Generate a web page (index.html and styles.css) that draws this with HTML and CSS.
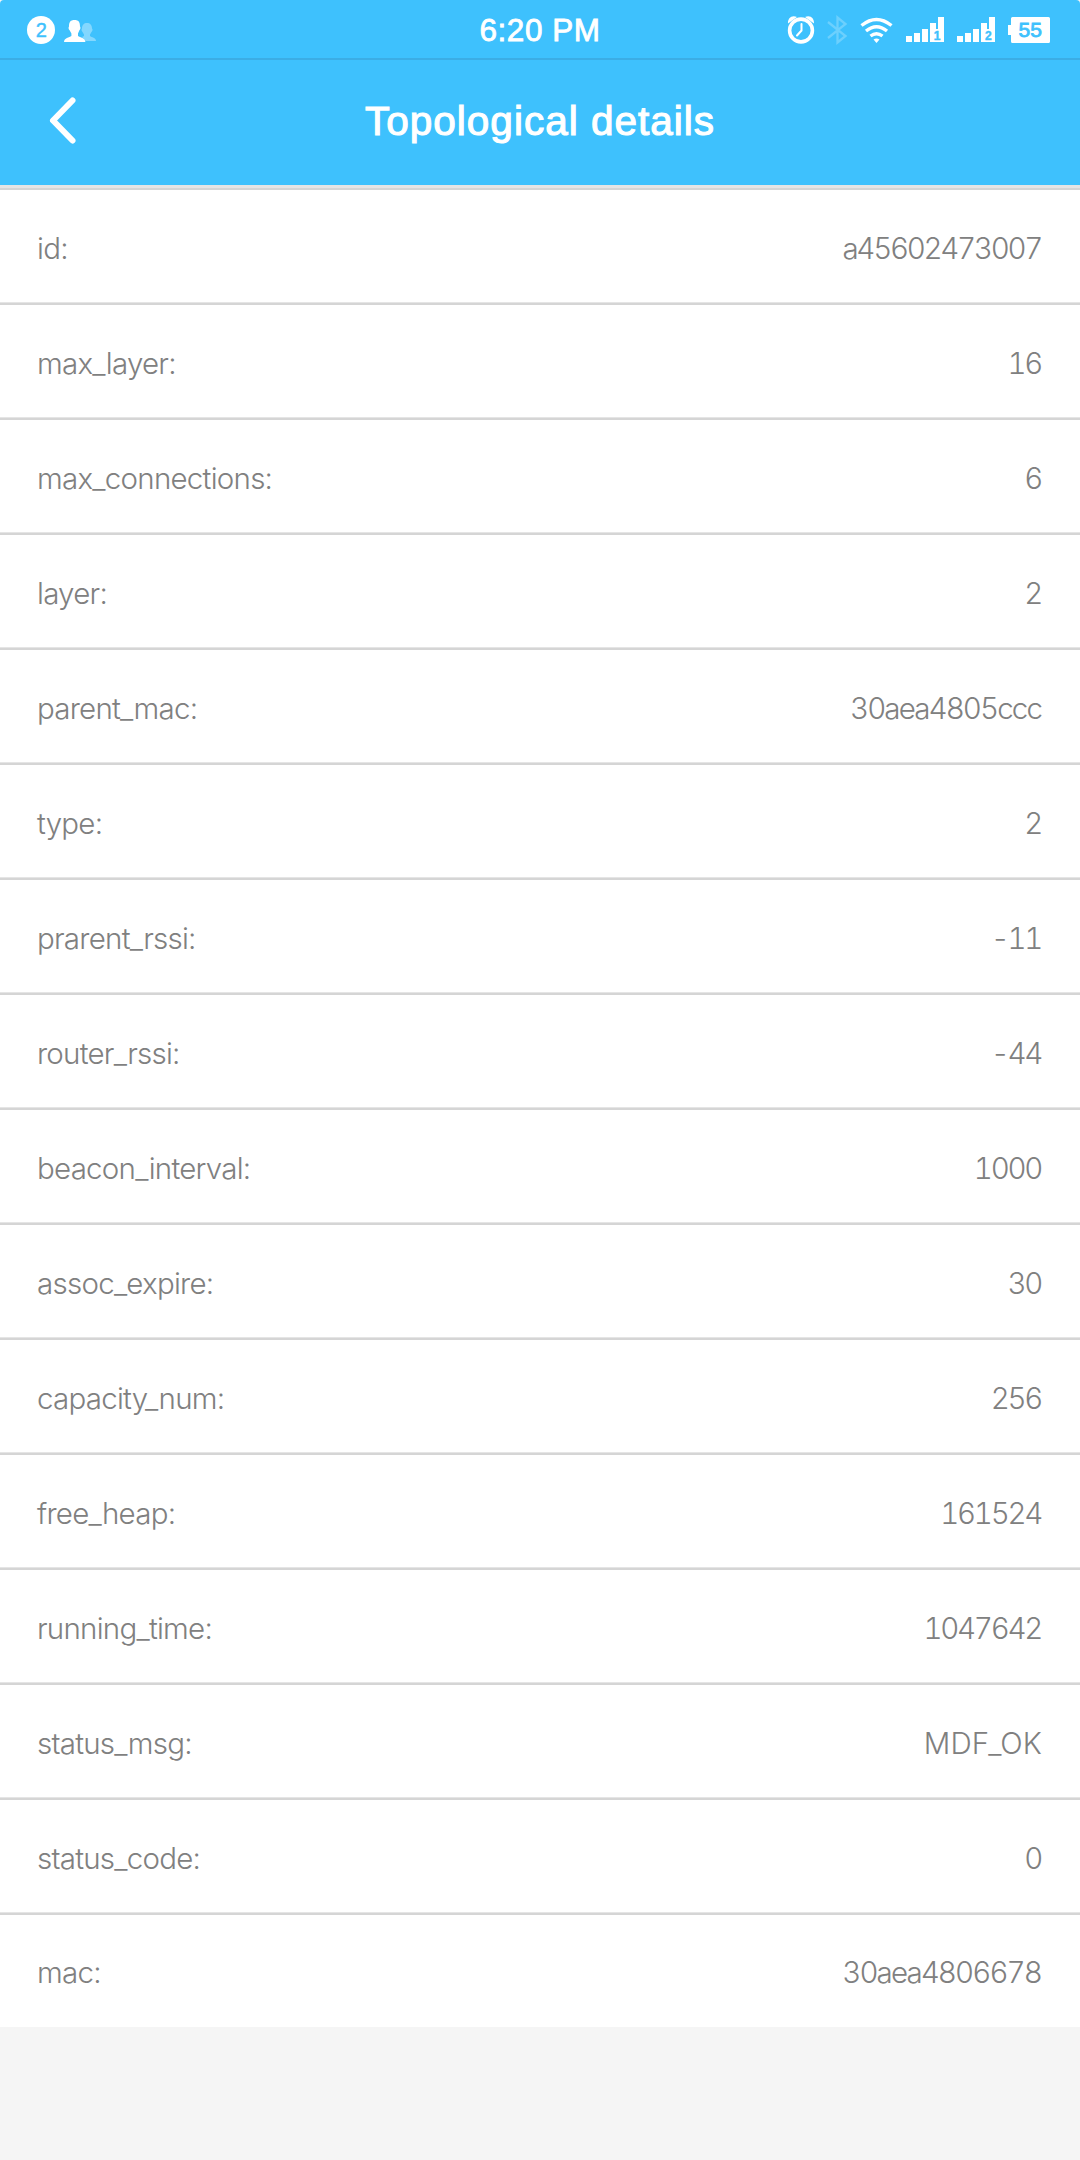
FILE: index.html
```html
<!DOCTYPE html>
<html lang="en">
<head>
<meta charset="utf-8">
<title>Topological details</title>
<link rel="stylesheet" href="styles.css">
</head>
<body>
<div class="status">
  <svg class="status-left" width="100" height="58" viewBox="0 0 100 58" fill="#fff">
    <circle cx="41" cy="30" r="14"/>
    <text class="count" x="41.2" y="37" text-anchor="middle">2</text>
    <path opacity=".36" d="M82 28.500C82 25 84 23 87 23s5 2 5 5.500c1 1 .4 2.500-.2 3L90 34.500v1.500c1.500 1.500 6 1.500 6 5H85.500L82 37l2-1v-1.500L82.200 31.500c-.8-1-.9-2-.2-3z"/>
    <path d="M69 26.500C69 22 70.500 20 74.500 20s5.500 2 5.500 6.500c.8.8.4 3-.6 3.800L78 33.500v2.500c2 1.600 7.400 2 7.400 6H64c0-4 5.400-4.400 7.400-6v-2.500L69.600 30.300c-1-.8-1.400-3-.6-3.800z"/>
  </svg>
  <div class="clock">6:20 PM</div>
  <svg class="status-right" width="292" height="58" viewBox="770 0 292 58" fill="#fff">
    <g fill="none" stroke="#fff" stroke-linecap="round">
      <circle cx="801" cy="30.500" r="11.400" stroke-width="3.600"/>
      <path d="M801.500 24v6.500L797 35.500" stroke-width="2"/>
    </g>
    <path d="M788 23.500C787.500 18 792 14.500 797 17zM814 23.500C814.500 18 810 14.500 805 17z"/>
    <path d="M828 22l17.500 14-8 6.500V17.500l8 6.500L828 38" fill="none" stroke="#fff" stroke-width="2.300" opacity=".24"/>
    <g fill="none" stroke="#fff" stroke-width="3.400">
      <path d="M861.500 25.500q15-12 30 0"/>
      <path d="M866 31q10.500-8.500 21 0"/>
      <path d="M870.500 36q6-4.500 12 0"/>
    </g>
    <path d="M873.500 39.500q3-2 6 0L876.500 43z"/>
    <path d="M906 36h6v6h-6zM914 33h6v9h-6zM922 29h6v13h-6zM930 23h6v6h2V17h6v25h-14z"/>
    <path d="M957 36h6v6h-6zM965 33h6v9h-6zM973 29h6v13h-6zM981 23h6v6h2V17h6v25h-14z"/>
    <text class="sim" x="937" y="40" text-anchor="middle">1</text>
    <text class="sim" x="988.300" y="40" text-anchor="middle">2</text>
    <path d="M1012.500 17h36q1.500 0 1.500 1.500v23q0 1.500-1.500 1.500h-36q-1.500 0-1.500-1.500V35h-3V25h3v-6.500q0-1.500 1.500-1.500z"/>
    <text class="level" x="1030.200" y="37" text-anchor="middle">55</text>
  </svg>
</div>
<header class="bar">
  <svg class="back" width="40" height="60" viewBox="0 0 40 60"><path d="M32.500 10.500L13 30.500l19.500 20" fill="none" stroke="#fff" stroke-width="6" stroke-linecap="round" stroke-linejoin="round"/></svg>
  <h1 class="title">Topological details</h1>
</header>
<main class="list">
  <div class="row"><span>id:</span><span class="value">a45602473007</span></div>
  <div class="row"><span>max_layer:</span><span class="value">16</span></div>
  <div class="row"><span>max_connections:</span><span class="value">6</span></div>
  <div class="row"><span>layer:</span><span class="value">2</span></div>
  <div class="row"><span>parent_mac:</span><span class="value mac">30aea4805ccc</span></div>
  <div class="row"><span>type:</span><span class="value">2</span></div>
  <div class="row"><span>prarent_rssi:</span><span class="value">-11</span></div>
  <div class="row"><span>router_rssi:</span><span class="value">-44</span></div>
  <div class="row"><span>beacon_interval:</span><span class="value">1000</span></div>
  <div class="row"><span>assoc_expire:</span><span class="value">30</span></div>
  <div class="row"><span>capacity_num:</span><span class="value">256</span></div>
  <div class="row"><span>free_heap:</span><span class="value">161524</span></div>
  <div class="row"><span>running_time:</span><span class="value">1047642</span></div>
  <div class="row"><span>status_msg:</span><span class="value text">MDF_OK</span></div>
  <div class="row"><span>status_code:</span><span class="value">0</span></div>
  <div class="row"><span>mac:</span><span class="value mac">30aea4806678</span></div>
</main>
</body>
</html>
```
FILE: styles.css
```css
* { box-sizing: border-box; }
body {
  margin: 0;
  min-height: 2160px;
  background: #f5f5f5;
  font-family: "Liberation Sans", Arial, sans-serif;
}
.status {
  height: 60px;
  display: grid;
  grid-template-columns: 1fr auto 1fr;
  align-items: start;
  color: #fff;
  background: linear-gradient(#3bade5, #3bade5) 0 58px / 100% 2px no-repeat #3ec1fd;
  border-radius: 4px 4px 0 0;
}
.status-right { justify-self: end; margin-right: 18px; }
.clock {
  font-size: 31.5px;
  line-height: 61px;
  letter-spacing: 0.5px;
  -webkit-text-stroke: 0.8px #fff;
}
.count { font-size: 20px; fill: #3ec1fd; stroke: #3ec1fd; stroke-width: .4px; }
.sim { font-size: 12px; font-weight: 700; fill: #3ec1fd; stroke: #3ec1fd; stroke-width: .4px; }
.level { font-size: 21px; fill: #3ec1fd; stroke: #3ec1fd; stroke-width: .8px; }
.bar {
  height: 130px;
  display: grid;
  grid-template-columns: 1fr auto 1fr;
  align-items: start;
  color: #fff;
  background: #3ec1fd;
  border-bottom: 2px solid #d5d5d5;
  box-shadow: inset 0 -3px #e5e5e5;
}
.back { margin: 30px 0 0 40px; }
.title {
  margin: 0;
  font-size: 40.5px;
  font-weight: 400;
  letter-spacing: 1px;
  line-height: 123px;
  -webkit-text-stroke: 1.1px #fff;
}
.list { background: #fff; }
.row {
  height: 115px;
  padding: 2px 39px 0 37px;
  display: flex;
  align-items: center;
  justify-content: space-between;
  border-bottom: 2px solid #d5d5d5;
  box-shadow: inset 0 -1px #e5e5e5;
  font-family: Inter, "Liberation Sans", sans-serif;
  font-size: 29.5px;
  font-weight: 300;
  letter-spacing: -0.75px;
  color: #808080;
}
.row:last-child { height: 112px; border-bottom: 0; box-shadow: none; }
.value {
  letter-spacing: -2.3px;
  font-variant-numeric: tabular-nums;
}
.mac { letter-spacing: -1.9px; }
.text { letter-spacing: 0.1px; margin-right: -1px; }
```
